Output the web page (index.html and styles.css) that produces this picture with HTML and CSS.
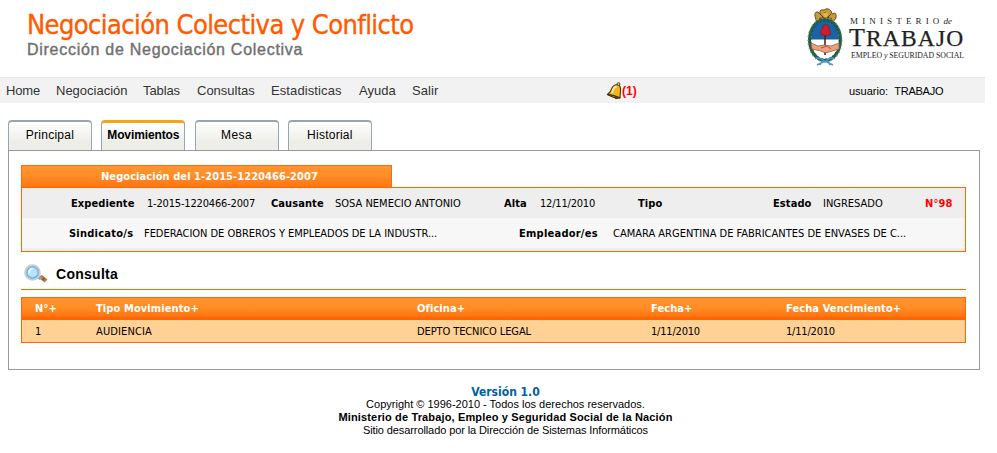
FILE: index.html
```
<!DOCTYPE html>
<html lang="es">
<head>
<meta charset="utf-8">
<title>Negociación Colectiva y Conflicto</title>
<link rel="stylesheet" href="styles.css">
</head>
<body>
<div class="page">
  <header class="header">
    <div class="heading">
      <h1>Negociación Colectiva y Conflicto</h1>
      <p>Dirección de Negociación Colectiva</p>
    </div>
    <div class="brand">
      <svg class="crest" viewBox="0 0 38 59" width="38" height="59">
        <path d="M10 12Q7 3 12 4L14 6Q13 1 18 2Q22-1 25 3L26 6Q31 3 30 10L27 14H11Z" fill="#c9993f" stroke="#74501f"/>
        <path d="M13 11Q19 7 26 11M14 6l3 3 2-5 3 5 3-3" fill="none" stroke="#54431f"/>
        <circle cx="19.500" cy="7" r="2.500" fill="#e8b44c"/>
        <ellipse cx="19" cy="32" rx="15.500" ry="20.500" fill="#fff" stroke="#285d43" stroke-width="3"/>
        <path d="M5 31.500C5 6 33 6 33 31.500Z" fill="#1763a6"/>
        <ellipse cx="19" cy="32" rx="17" ry="22" fill="none" stroke="#65a184" stroke-width="1.200" stroke-dasharray="1.500 2.500"/>
        <ellipse cx="19" cy="32" rx="14" ry="19" fill="none" stroke="#16372c" stroke-width=".7" stroke-dasharray="2 2"/>
        <path d="M19 24V47" stroke="#3c2a24" stroke-width="1.600"/>
        <path d="M14.500 26Q14 22 17 20Q16 16 20 17Q24 17 23 22L25 26Q20 29 14.500 26Z" fill="#d61a26" stroke="#7b1821" stroke-width=".6"/>
        <path d="M5 35L12 38L18 37L25 38L33 35V41L23 44Q19 46 15 43L6 41Z" fill="#e9a17b" stroke="#a65d42" stroke-width=".8"/>
        <path d="M15 40L21 38L25 41" fill="none" stroke="#8f4f3b" stroke-width=".8"/>
        <path d="M10 50Q16 50 19 54Q22 50 28 50M19 53L11 57M19 53L27 57M16 53L14 57M22 53L24 57" fill="none" stroke="#4d9ad0" stroke-width="1.600"/>
      </svg>
      <div class="ministry">
        <div class="m-top">MINISTERIO<i>de</i></div>
        <div class="m-name"><span>T</span>RABAJO</div>
        <div class="m-sub">EMPLEO <i>y</i> SEGURIDAD SOCIAL</div>
      </div>
    </div>
  </header>

  <nav class="menu">
    <a class="home">Home</a><a class="neg">Negociación</a><a class="tab">Tablas</a><a class="con">Consultas</a><a class="est">Estadisticas</a><a class="ayu">Ayuda</a><a class="sal">Salir</a>
    <span class="alert">
      <svg viewBox="0 0 17 18" width="17" height="18">
        <path d="M1.500 12.500Q5 10 6 6Q7.500 2.500 12 2.500Q15 4 14.500 9L14 16Q8 16.500 1.500 12.500Z" fill="#f3b31e" stroke="#4c3517" stroke-width="1.100"/>
        <path d="M6 11Q7.500 5 10.500 4.500" fill="none" stroke="#ffe99a" stroke-width="2"/>
        <path d="M1.500 12.500Q8 13 14 16" fill="none" stroke="#453018" stroke-width="1.600"/>
        <circle cx="12.500" cy="2" r="1.400" fill="#eac256" stroke="#4c3517" stroke-width=".8"/>
        <path d="M8 15Q10 18 12 16" fill="#56431f" stroke="#3c2c18"/>
      </svg><b>(1)</b>
    </span>
    <span class="user">usuario:&nbsp; <span>TRABAJO</span></span>
  </nav>

  <div class="tabs">
    <a>Principal</a><a class="active">Movimientos</a><a class="mesa">Mesa</a><a>Historial</a>
  </div>

  <main class="panel">
    <h2 class="case-title">Negociación del 1-2015-1220466-2007</h2>
    <section class="case">
      <div class="row first">
        <b>Expediente</b><span class="num">1-2015-1220466-2007</span><b>Causante</b><span>SOSA NEMECIO ANTONIO</span><b>Alta</b><span class="date">12/11/2010</span><b>Tipo</b><b>Estado</b><span>INGRESADO</span><b class="count">N°98</b>
      </div>
      <div class="row second">
        <b class="wide">Sindicato/s</b><span class="long">FEDERACION DE OBREROS Y EMPLEADOS DE LA INDUSTR...</span><b class="wide">Empleador/es</b><span>CAMARA ARGENTINA DE FABRICANTES DE ENVASES DE C...</span>
      </div>
    </section>

    <div class="query">
      <svg viewBox="0 0 25 20" width="25" height="20">
        <path d="M14 13L18 11L23.500 15.500L20.500 18.500Z" fill="#b8783e"/>
        <path d="M18.500 16L20.500 14" stroke="#7f5030" stroke-width="1.500"/>
        <path d="M13 12L17 15" stroke="#9aa0a5" stroke-width="3"/>
        <circle cx="8.500" cy="8.500" r="7.300" fill="#b5ddfa" stroke="#c9cdd1" stroke-width="2"/>
        <circle cx="8.500" cy="8.500" r="5.600" fill="#b9e1ff" stroke="#67acdf" stroke-width="1.200"/>
        <path d="M5.500 9.500Q4.500 5.500 8.500 4.500" fill="none" stroke="#effaff" stroke-width="2"/>
      </svg>
      <h3>Consulta</h3>
    </div>

    <section class="grid">
      <div class="cells head"><b>N°+</b><b>Tipo Movimiento+</b><b>Oficina+</b><b>Fecha+</b><b>Fecha Vencimiento+</b></div>
      <div class="cells data"><span>1</span><span class="aud">AUDIENCIA</span><span class="dep">DEPTO TECNICO LEGAL</span><span class="date">1/11/2010</span><span class="date">1/11/2010</span></div>
    </section>
  </main>

  <footer class="footer">
    <div class="version">Versión 1.0</div>
    <div>Copyright © 1996-2010 - Todos los derechos reservados.</div>
    <div class="owner">Ministerio de Trabajo, Empleo y Seguridad Social de la Nación</div>
    <div class="dev">Sitio desarrollado por la Dirección de Sistemas Informáticos</div>
  </footer>
</div>
</body>
</html>
```
FILE: styles.css
```
* { box-sizing: border-box; }
body { margin: 0; background: #fff; color: #000; font: 11px "DejaVu Sans Condensed", "DejaVu Sans", sans-serif; font-stretch: condensed; overflow: hidden; }
h1, h2, h3, p { margin: 0; }
.page { width: 985px; }

.header { height: 77px; display: flex; justify-content: space-between; padding: 8px 19px 0 27px; }
h1 { font-size: 27px; font-weight: 400; line-height: 32px; letter-spacing: -.58px; color: #ff5a00; -webkit-text-stroke: .35px #ff5a00; padding-top: 1px; white-space: nowrap; }
.heading p { font: 16px/18px "Liberation Sans", sans-serif; letter-spacing: .72px; color: #707070; -webkit-text-stroke: .4px #707070; }
.brand { display: flex; width: 160px; }
.crest { flex: none; }
.ministry { flex: none; padding: 8px 0 0 5px; font-family: "Liberation Serif", serif; color: #222; white-space: nowrap; }
.m-top { font-size: 9px; line-height: 10px; letter-spacing: 4.15px; padding-left: 1px; }
.m-top i { font-size: 9px; letter-spacing: 0; }
.m-name { font-size: 23.5px; line-height: 24px; height: 25px; letter-spacing: 1.15px; -webkit-text-stroke: .25px #222; }
.m-name span { font-size: 26px; }
.m-sub { font-size: 7.8px; line-height: 9px; letter-spacing: -.03px; padding: 0 0 0 2px; }

.menu { height: 26px; display: flex; background: #f2f2f2; border-top: 1px solid #e4e4e4; padding-left: 6px; font: 13px/26px "Liberation Sans", sans-serif; color: #333; white-space: nowrap; }
.menu > * { flex: none; }
.home { width: 50px; letter-spacing: -.15px; }
.neg { width: 87px; }
.tab { width: 54px; letter-spacing: -.1px; }
.con { width: 74px; }
.est { width: 88px; letter-spacing: .1px; }
.ayu { width: 53px; }
.sal { width: 194px; letter-spacing: .1px; }
.alert { width: 243px; display: flex; align-items: center; }
.alert svg { margin-top: 1px; }
.alert b { font-size: 12px; color: #f00; letter-spacing: .1px; margin-left: -1px; }
.user { font-size: 11px; color: #000; }
.user span { letter-spacing: -.25px; }

.tabs { display: flex; gap: 9.3px; padding: 17px 0 0 8px; height: 47px; }
.tabs a { width: 84px; height: 30px; border: 1px solid #93a6b1; border-top-width: 2px; border-bottom: 0; border-radius: 4px 4px 0 0; background: linear-gradient(#fff, #eeeee9 70%); font: 12px/26px "Liberation Sans", sans-serif; text-align: center; letter-spacing: .25px; }
.tabs .active { border-top: 3px solid #f8a31c; font-weight: 700; line-height: 24px; letter-spacing: -.12px; }
.tabs .mesa { letter-spacing: .4px; }

.panel { width: 972px; height: 220px; margin-left: 8px; border: 1px solid #999; padding: 14px 13px 0 12px; }
.case-title { width: 371px; height: 22px; border: 1px solid #ff6a0a; border-bottom: 0; background: linear-gradient(#ff9633 0, #ff8d28 45%, #ff7612); color: #fff; font-size: 11px; line-height: 21px; letter-spacing: .07px; padding-left: 79px; }
.case { width: 945px; height: 65px; border: 1px solid #ff6500; background: #eee; }
.row { display: grid; height: 30px; line-height: 31px; white-space: nowrap; }
.first { grid-template-columns: 76px 124px 64px 169px 36px 98px 135px 50px 102px 40px; padding-left: 49px; }
.second { grid-template-columns: 75px 375px 94px 310px; padding-left: 47px; background: #f7f7f7; }
.row b { letter-spacing: .08px; }
.row .num { letter-spacing: -.18px; }
.date { letter-spacing: -.2px; }
.row .wide { letter-spacing: .24px; }
.row .long { letter-spacing: -.04px; }
.row .count { color: #f00; letter-spacing: .1px; }

.query { width: 945px; height: 38px; border-bottom: 1px solid #ff6500; display: flex; padding: 12px 0 0 3px; }
.query h3 { font: 700 14px/20px "Liberation Sans", sans-serif; letter-spacing: .27px; padding-left: 7px; }

.grid { width: 945px; height: 46px; margin-top: 7px; border: 1px solid #ff6500; background: #ffd194; }
.cells { display: grid; grid-template-columns: 61px 321px 234px 135px 1fr; padding-left: 13px; height: 22px; line-height: 21px; }
.head { height: 22px; color: #fff; background: linear-gradient(#ff9430 0, #ff8c26 45%, #ff7410 85%, #ff6500 86%); letter-spacing: .1px; }
.data { line-height: 23px; }
.aud { letter-spacing: .13px; }
.dep { letter-spacing: -.1px; }

.footer { width: 995px; margin-left: 8px; padding: 15px 0 0; text-align: center; font: 11px/13px "Liberation Sans", sans-serif; }
.version { font: 700 12px/13px "DejaVu Sans Condensed", "DejaVu Sans", sans-serif; font-stretch: condensed; color: #0060a4; position: relative; top: 1px; }
.owner { font-weight: 700; letter-spacing: .145px; }
.dev { letter-spacing: -.1px; }
```
